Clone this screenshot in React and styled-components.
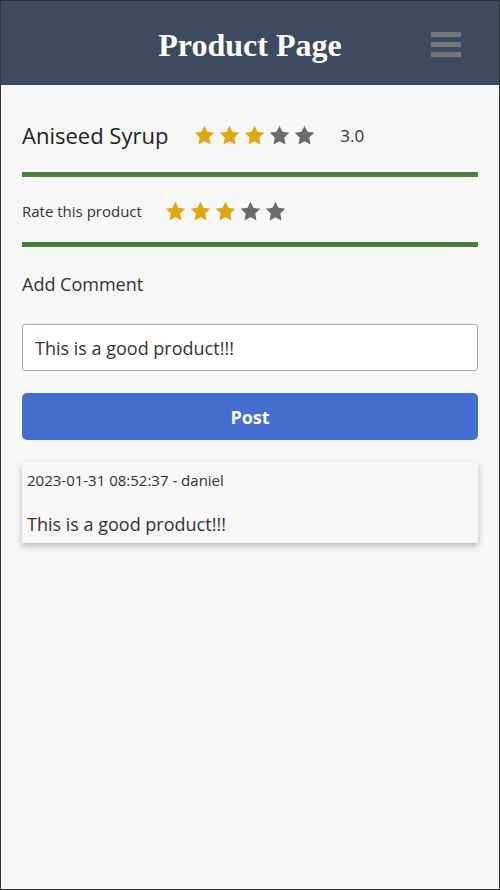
import React from 'react'
import styled, { createGlobalStyle } from 'styled-components';

const GlobalStyle = createGlobalStyle`
    * { box-sizing: border-box; }
    html, body { margin: 0; padding: 0; }
    body {
        font-family: "Open Sans", "Noto Sans", sans-serif;
        color: #333;
        background: #f7f7f7;
    }
`;

const Star = ({ filled }) => (
    <svg width="21" height="20" viewBox="0 0 24 23">
        <path
            d="M12 0.8l3.4 7.1 7.8 1.1-5.7 5.5 1.4 7.8L12 18.6l-6.9 3.7 1.4-7.8L0.8 9l7.8-1.1z"
            fill={filled ? '#e0a80d' : '#6b6b70'}
        />
    </svg>
);

const Stars = ({ value }) => (
    <StarRow>
        {[1, 2, 3, 4, 5].map((n) => (
            <Star key={n} filled={n <= value} />
        ))}
    </StarRow>
);

const ProductPage = () => {
    return (
        <Frame>
            <GlobalStyle />
            <Header>
                <span />
                <Title>Product Page</Title>
                <Burger>
                    <Bar />
                    <Bar />
                    <Bar />
                </Burger>
            </Header>
            <Content>
                <ProductRow>
                    <ProductName>Aniseed Syrup</ProductName>
                    <Stars value={3} />
                    <Score>3.0</Score>
                </ProductRow>
                <Divider />
                <RateRow>
                    <RateText>Rate this product</RateText>
                    <Stars value={3} />
                </RateRow>
                <Divider />
                <Label>Add Comment</Label>
                <Input defaultValue="This is a good product!!!" />
                <PostButton>Post</PostButton>
                <Card>
                    <Meta>2023-01-31 08:52:37 - daniel</Meta>
                    <CommentText>This is a good product!!!</CommentText>
                </Card>
            </Content>
        </Frame>
    )
}

export default ProductPage;

const Frame = styled.div`
    height: 100vh;
    border: 1px solid #333;
    background: #f7f7f7;
    overflow: hidden;
`;

const Header = styled.header`
    height: 84px;
    background: #3d4a60;
    display: grid;
    grid-template-columns: 1fr auto 1fr;
    align-items: center;
`;

const Title = styled.h1`
    margin: 0;
    font-family: "Liberation Serif", "Times New Roman", serif;
    font-weight: 700;
    font-size: 32px;
    color: #fff;
    padding-top: 4px;
`;

const Burger = styled.div`
    justify-self: end;
    margin-right: 38px;
    display: flex;
    flex-direction: column;
    gap: 5px;
    padding-top: 2px;
`;

const Bar = styled.div`
    width: 30px;
    height: 5px;
    background: #777;
`;

const Content = styled.main`
    padding: 0 21px;
`;

const StarRow = styled.div`
    display: flex;
    gap: 4px;
`;

const ProductRow = styled.div`
    display: flex;
    align-items: center;
    height: 30px;
    margin-top: 35px;
`;

const ProductName = styled.h2`
    margin: 0 26px 0 0;
    font-weight: 400;
    font-size: 22px;
    color: #222;
`;

const Score = styled.span`
    margin-left: 25px;
    font-size: 17px;
    color: #333;
`;

const Divider = styled.hr`
    margin: 0;
    border: none;
    height: 5px;
    background: #4b7f3e;
    margin-top: 22px;
`;

const RateRow = styled.div`
    display: flex;
    align-items: center;
    height: 30px;
    margin-top: 19px;
    margin-bottom: -6px;
`;

const RateText = styled.span`
    font-size: 15px;
    color: #333;
    margin-right: 23px;
`;

const Label = styled.div`
    margin-top: 25px;
    font-size: 18px;
    color: #333;
`;

const Input = styled.input`
    display: block;
    width: 100%;
    height: 47px;
    margin-top: 28px;
    padding: 0 12px;
    border: 1px solid #a9aab0;
    border-radius: 3px;
    background: #fff;
    font-family: inherit;
    font-size: 18px;
    color: #333;
    outline: none;
`;

const PostButton = styled.button`
    display: block;
    width: 100%;
    height: 47px;
    margin-top: 22px;
    border: none;
    border-radius: 5px;
    background: #436dcf;
    color: #fff;
    font-family: inherit;
    font-weight: 700;
    font-size: 18px;
`;

const Card = styled.div`
    margin-top: 22px;
    padding: 8px 5px 7px;
    background: #f7f7f7;
    box-shadow: 0 3px 6px rgba(80, 60, 40, 0.35);
`;

const Meta = styled.div`
    font-size: 15px;
    color: #333;
`;

const CommentText = styled.div`
    margin-top: 22px;
    font-size: 18px;
    color: #333;
`;
